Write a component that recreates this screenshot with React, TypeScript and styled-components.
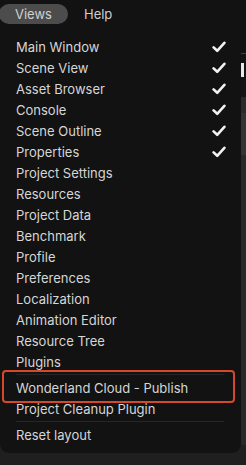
import React from 'react';
import styled, { createGlobalStyle } from 'styled-components';

const Global = createGlobalStyle`
  html, body { margin: 0; padding: 0; background: #1e1e1e; }
  body { font-family: Inter, "Noto Sans", sans-serif; -webkit-font-smoothing: antialiased; }
`;

const Screen = styled.div`
  position: relative; width: 246px; height: 465px; overflow: hidden; background: #1f1f1f;
`;

const MenuBar = styled.div`
  display: flex; align-items: center; height: 26px; padding-top: 1px; box-sizing: border-box; background: #121212;
`;

const BarButton = styled.div<{ open?: boolean }>`
  height: 20px; line-height: 20px; padding: 0 16px 0 16px; border-radius: 10px;
  font-size: 13px; color: #d0d0d0; background: ${({ open }) => (open ? '#4c4c4c' : 'transparent')};
  margin-left: ${({ open }) => (open ? '-1px' : '0')};
`;

// the editor underneath the menu, only its right edge shows
const Backdrop = styled.div`
  display: flex; flex-direction: column;
`;
const Strip = styled.div<{ h: number; bg: string }>`
  height: ${({ h }) => h}px; background: ${({ bg }) => bg}; flex-shrink: 0;
`;
const Handle = styled.div`
  height: 14px; display: flex; justify-content: flex-end; background: #141414;
  &::after { content: ''; width: 3px; height: 14px; background: #e8e8e8; margin-right: 2px; }
`;

const Panel = styled.div`
  position: absolute; left: 0; top: 26px; width: 241px;
  background: #121212; border-radius: 0 0 9px 9px;
  padding: 10px 0 8px; box-sizing: border-box;
`;

const Item = styled.div`
  display: flex; align-items: center; justify-content: space-between;
  height: 21px; padding: 0 15px 0 16px;
  font-size: 13px; color: #d6d6d6; white-space: nowrap;
`;

const Separator = styled.div`
  height: 1px; background: #262626; margin: 2px 17px 2px 16px;
`;

const Highlight = styled.div`
  position: absolute; left: 2px; top: 344px; width: 233px; height: 33px;
  box-sizing: border-box; border: 2px solid #d4482c; border-radius: 4px;
`;

const Check = () => (
  <svg width="14" height="12" viewBox="0 0 14 12" fill="none">
    <path d="M1.6 6.4 L5.2 9.8 L12.4 1.8" stroke="#f2f2f2" strokeWidth="2.6" strokeLinecap="round" strokeLinejoin="round" />
  </svg>
);

const viewItems: [string, boolean][] = [
  ['Main Window', true],
  ['Scene View', true],
  ['Asset Browser', true],
  ['Console', true],
  ['Scene Outline', true],
  ['Properties', true],
  ['Project Settings', false],
  ['Resources', false],
  ['Project Data', false],
  ['Benchmark', false],
  ['Profile', false],
  ['Preferences', false],
  ['Localization', false],
  ['Animation Editor', false],
  ['Resource Tree', false],
  ['Plugins', false],
];

export default function App() {
  return (
    <Screen>
      <Global />
      <MenuBar>
        <BarButton open>Views</BarButton>
        <BarButton>Help</BarButton>
      </MenuBar>
      <Backdrop>
        <Strip h={27} bg="#121212" />
        <Strip h={1} bg="#6a2460" />
        <Strip h={9} bg="#141414" />
        <Handle />
        <Strip h={20} bg="#141414" />
        <Strip h={16} bg="#2a2a2a" />
        <Strip h={42} bg="#333333" />
        <Strip h={290} bg="#282828" />
      </Backdrop>
      <Panel>
        {viewItems.map(([label, on]) => (
          <Item key={label}>
            {label}
            {on && <Check />}
          </Item>
        ))}
        <Separator />
        <Item>Wonderland Cloud - Publish</Item>
        <Item>Project Cleanup Plugin</Item>
        <Separator />
        <Item>Reset layout</Item>
        <Highlight />
      </Panel>
    </Screen>
  );
}
